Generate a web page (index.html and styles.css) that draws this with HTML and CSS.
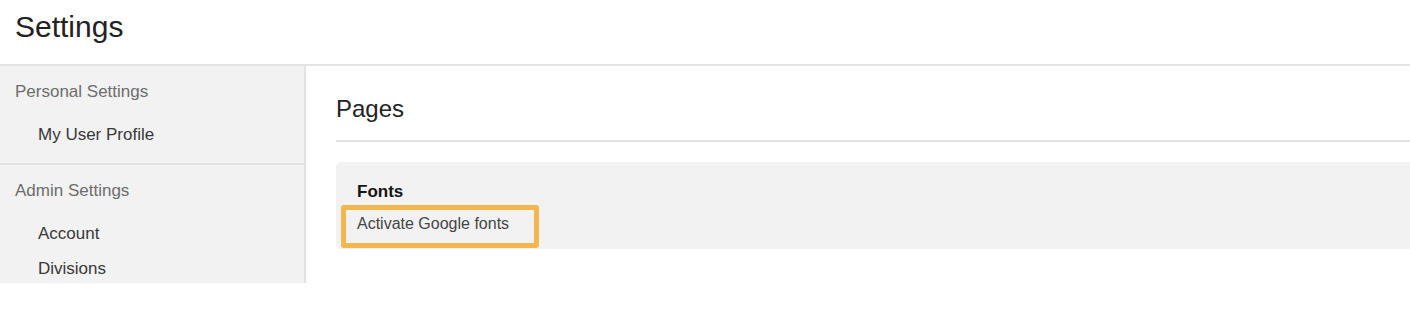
FILE: index.html
```html
<!DOCTYPE html>
<html lang="en">
<head>
<meta charset="utf-8">
<title>Settings</title>
<link rel="stylesheet" href="styles.css">
</head>
<body>
<header class="top">
  <h1 class="title">Settings</h1>
</header>
<div class="layout">
  <nav class="sidebar">
    <section class="nav-group">
      <div class="nav-heading">Personal Settings</div>
      <ul class="nav-list">
        <li class="nav-item">My User Profile</li>
      </ul>
    </section>
    <section class="nav-group">
      <div class="nav-heading">Admin Settings</div>
      <ul class="nav-list">
        <li class="nav-item">Account</li>
        <li class="nav-item">Divisions</li>
      </ul>
    </section>
  </nav>
  <main class="content">
    <h2 class="page-title">Pages</h2>
    <div class="card">
      <div class="card-title">Fonts</div>
      <div class="option">Activate Google fonts</div>
    </div>
  </main>
</div>
</body>
</html>
```

FILE: styles.css
```css
* { box-sizing: border-box; }
html, body {
  margin: 0;
  padding: 0;
  background: #ffffff;
  font-family: "Liberation Sans", Arial, sans-serif;
  color: #222222;
}
.top {
  padding: 9px 15px 19px;
  border-bottom: 2px solid #e3e3e3;
}
.title {
  margin: 0;
  font-size: 30px;
  line-height: 36px;
  font-weight: 400;
  color: #222222;
}
.layout {
  display: flex;
  align-items: flex-start;
}
.sidebar {
  width: 306px;
  flex: 0 0 306px;
  height: 217px;
  overflow: hidden;
  background: #f2f2f2;
  border-right: 2px solid #e2e2e2;
}
.nav-group {
  padding: 14px 0 11px;
  border-bottom: 2px solid #e2e2e2;
}
.nav-heading {
  padding-left: 15px;
  font-size: 17px;
  line-height: 24px;
  color: #6d6d6d;
  margin-bottom: 13px;
}
.nav-list {
  list-style: none;
  margin: 0;
  padding: 0;
}
.nav-item {
  padding-left: 38px;
  font-size: 17px;
  line-height: 35px;
  color: #383838;
}
.content {
  flex: 1;
  padding: 28px 0 0 30px;
}
.page-title {
  margin: 0 0 20px;
  padding-bottom: 16px;
  border-bottom: 2px solid #e2e2e2;
  font-size: 24px;
  line-height: 30px;
  font-weight: 400;
  color: #222222;
}
.card {
  background: #f2f2f2;
  border-radius: 5px 0 0 5px;
  padding: 18px 0 1px 21px;
}
.card-title {
  font-size: 17px;
  line-height: 24px;
  font-weight: 700;
  color: #151515;
  margin-bottom: 1px;
}
.option {
  margin-left: -16px;
  width: 198px;
  height: 43px;
  border: 5px solid #f5b74d;
  border-radius: 3px;
  padding: 3px 11px 0;
  font-size: 16px;
  line-height: 22px;
  color: #454545;
}
```
